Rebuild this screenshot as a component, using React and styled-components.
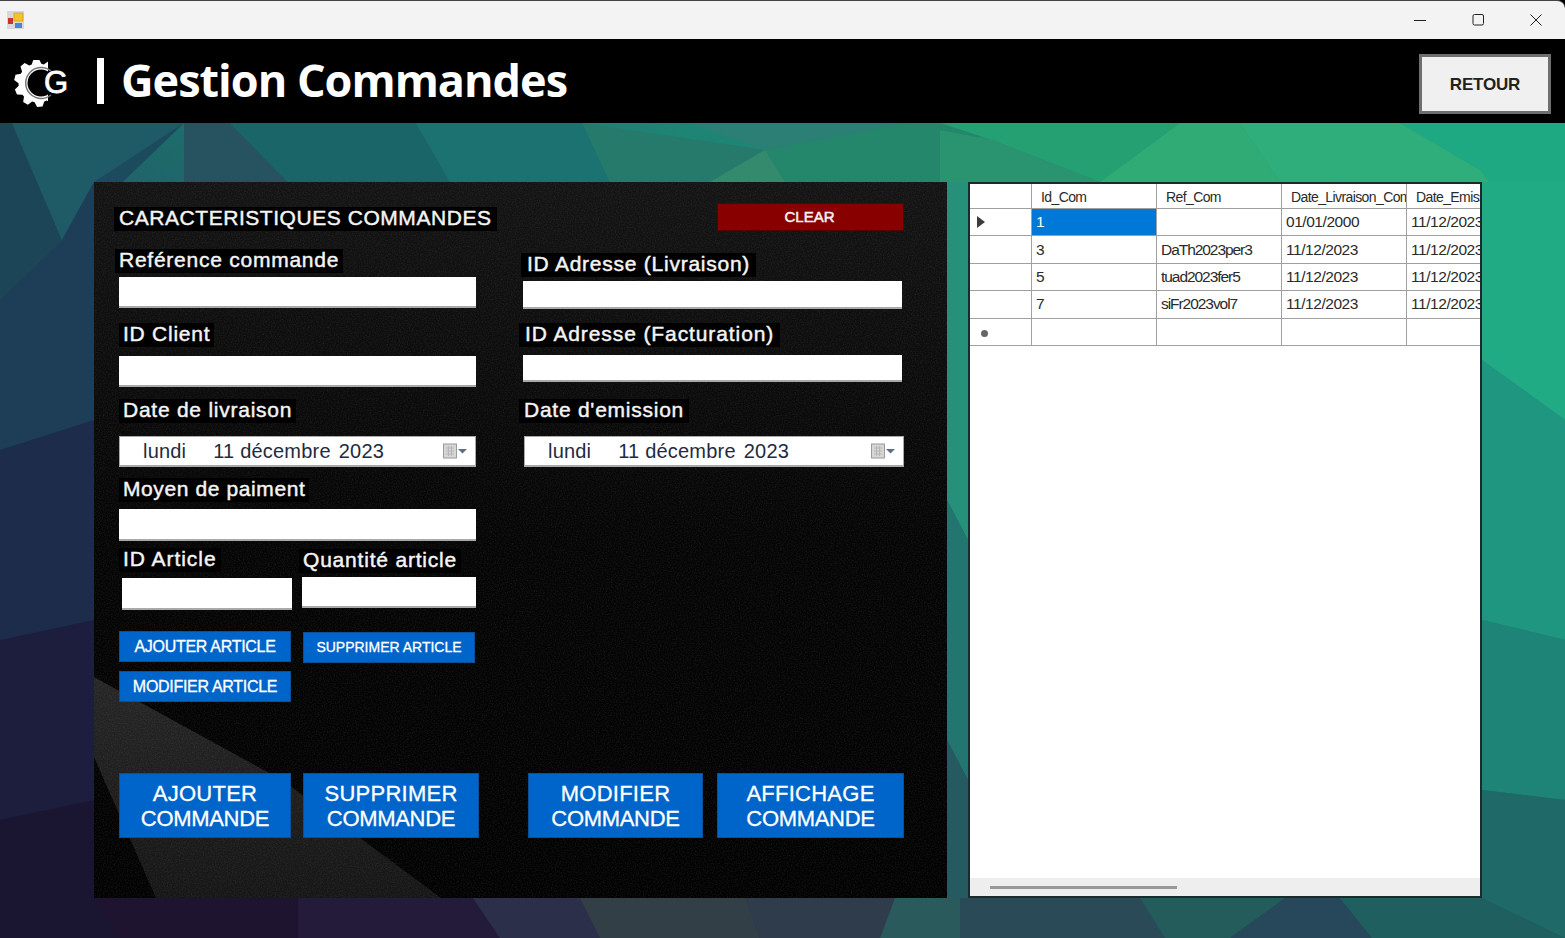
import React from "react";
import styled, { createGlobalStyle } from "styled-components";

const Global = createGlobalStyle`
  html, body { margin: 0; padding: 0; background: #000; overflow: hidden; }
  * { box-sizing: border-box; }
  body { font-family: "Liberation Sans", Arial, sans-serif; }
`;

const Page = styled.div`
  width: 1565px; height: 938px; display: flex; flex-direction: column; background: #000; overflow: hidden;
`;
const TitleBar = styled.div`
  height: 39px; flex: none; background: #f3f3f3; border-top: 1px solid #454545;
  border-radius: 0 8px 0 0; display: flex; align-items: center; justify-content: space-between;
  padding: 0 23px 0 7px;
`;
const WinControls = styled.div`display: flex; align-items: center; gap: 46px;`;
const Header = styled.header`
  height: 84px; flex: none; background: #000; display: flex; align-items: center; padding: 0 14px;
`;
const LogoMark = styled.svg`flex: none; margin-top: 5px;`;
const Divider = styled.span`
  width: 7px; height: 46px; margin: 0 18px 0 25px; background: #fff; flex: none;
`;
const Heading = styled.h1`
  margin: 0 0 0 -1px; flex: 1; color: #fff; font: 700 45px/1 "Open Sans", sans-serif; letter-spacing: -1px; padding-bottom: 4px;
`;
const BackButton = styled.button`
  width: 132px; height: 60px; margin-top: 5px; padding: 2px 0 0; background: #f0f0f0; border: 3px solid #6e6e6e; color: #222;
  font: 700 17px "Liberation Sans", sans-serif; letter-spacing: -0.2px;
`;
const Workspace = styled.main`
  position: relative; flex: 1; display: flex; gap: 21px; padding: 59px 0 40px 94px; overflow: hidden;
`;
const Backdrop = styled.svg`position: absolute; inset: 0; width: 100%; height: 100%;`;
const Panel = styled.section`
  position: relative; width: 853px; height: 716px; background: #0b0b0b; display: flex; flex-direction: column;
  padding: 21px 0 60px 25px; overflow: hidden;
`;
const PanelArt = styled.svg`position: absolute; inset: 0; width: 100%; height: 100%;`;
const Columns = styled.div`
  position: relative; display: grid; grid-template-columns: 404px 381px; flex: 1;
`;
const Column = styled.div`display: flex; flex-direction: column; align-items: flex-start; padding-top: ${p => p.$top || 0}px;`;
const Label = styled.label`
  display: block; height: 24px; line-height: 22px; background: #000; color: #f4f4f4; white-space: nowrap;
  font-size: 21px; font-weight: 400; -webkit-text-stroke: 0.45px #f4f4f4; padding: 0 ${p => p.$pad ?? 4}px;
  margin: ${p => p.$top || 0}px 0 0 ${p => (p.$left || 0) - (p.$pad ?? 4)}px;
  letter-spacing: ${p => p.$track ?? 0.75}px;
`;
const Field = styled.input`
  display: block; width: ${p => p.$width || 357}px; height: ${p => p.$height || 31}px;
  margin: ${p => p.$top || 0}px 0 0 ${p => p.$left || 0}px;
  background: #fff; border: 0; border-bottom: 2px solid #a9a9a9; border-radius: 0; padding: 0;
`;
const DateBox = styled.div`
  display: flex; align-items: center; height: 31px; width: ${p => p.$width}px;
  margin: ${p => p.$top || 0}px 0 0 ${p => p.$left || 0}px;
  background: #fff; border: 1px solid #a9a9a9; border-width: 1px 1px 2px 1px; color: #1f2b3f; font-size: 20px;
  padding-left: 23px; letter-spacing: 0.2px;
`;
const DatePart = styled.span`margin-right: ${p => p.$gap}px; white-space: nowrap;`;
const DateIcon = styled.svg`margin-left: auto; margin-right: ${p => p.$right || 6}px; flex: none;`;
const ArticleGrid = styled.div`display: grid; grid-template-columns: 183px 174px; width: 357px;`;
const ArticleCol = styled.div`display: flex; flex-direction: column; align-items: flex-start;`;
const BlueButton = styled.button`
  width: ${p => p.$width || 172}px; height: ${p => p.$height || 31}px;
  margin: ${p => p.$top || 0}px 0 0 ${p => p.$left || 0}px; padding: 0;
  background: #0065ca; border: 1px solid #0a4f98; color: #fff; font-family: "Liberation Sans", sans-serif;
  font-size: ${p => p.$size || 16}px; font-weight: 400; -webkit-text-stroke: ${p => p.$stroke ?? 0.3}px #fff; letter-spacing: ${p => p.$track ?? 0}px;
  line-height: 25px;
`;
const FirstLine = styled.span`display: block; letter-spacing: 0.25px;`;
const ClearButton = styled.button`
  width: 187px; height: 28px; margin-left: 194px; padding: 0 2px 2px 0; background: #880000; border: 1px solid #560000; color: #f4f4f4;
  font: 400 15px "Liberation Sans", sans-serif; -webkit-text-stroke: 0.5px #f4f4f4;
`;
const ActionRow = styled.div`position: relative; display: flex;`;
const DataGrid = styled.section`
  position: relative; width: 514px; height: 716px; background: #fff; border: 2px solid #1b2a2c; display: flex; flex-direction: column; overflow: hidden;
`;
const GridTable = styled.div`
  display: grid; grid-template-columns: 62px 125px 125px 125px 125px; grid-template-rows: 25px repeat(5, 27.4px); flex: 1; align-content: start;
  width: 562px; color: #2a2a2a; font-size: 15.5px;
`;
const Cell = styled.div`
  display: flex; align-items: center; overflow: hidden; white-space: nowrap; border-right: 1px solid #a0a0a0; border-bottom: 1px solid #a0a0a0;
  padding-left: ${p => p.$pad ?? 4}px; background: ${p => (p.$selected ? "#0078d7" : "#fff")}; color: ${p => (p.$selected ? "#fff" : "inherit")};
  letter-spacing: ${p => p.$track ?? -0.45}px;
`;
const HeaderCell = styled(Cell)`padding-left: 9px; padding-top: 2px; font-size: 14px; letter-spacing: -0.6px;`;
const RowHead = styled(Cell)`padding-left: 7px; justify-content: flex-start;`;
const RowArrow = styled.span`width: 0; height: 0; border-left: 8px solid #3c3c3c; border-top: 6px solid transparent; border-bottom: 6px solid transparent;`;
const NewRowMark = styled.span`width: 7px; height: 7px; margin: 3px 0 0 4px; border-radius: 50%; background: #666;`;
const Scrollbar = styled.div`height: 18px; flex: none; background: #eee; padding: 8px 0 0 20px;`;
const ScrollThumb = styled.div`width: 187px; height: 3px; background: #999;`;

const gearPath = (() => {
  const cx = 24, cy = 23, teeth = 10, out = 24, inn = 19.5;
  const pts = [];
  for (let i = 0; i < teeth; i++) {
    const s = (Math.PI * 2) / teeth;
    const a = i * s + 0.3;
    [[-0.5, inn], [-0.28, out], [0.08, out], [0.3, inn]].forEach(([o, r]) => {
      const t = a + o * s;
      pts.push(`${(cx + Math.cos(t) * r).toFixed(1)} ${(cy + Math.sin(t) * r).toFixed(1)}`);
    });
  }
  return "M" + pts.join("L") + "Z";
})();

const Logo = () => (
  <LogoMark width="58" height="48" viewBox="0 0 58 48" aria-hidden="true">
    <defs>
      <clipPath id="gearClip"><rect x="-2" y="-2" width="36" height="54" /></clipPath>
    </defs>
    <path d={gearPath} fill="#fff" clipPath="url(#gearClip)" />
    <circle cx="27" cy="23" r="13.5" fill="#000" />
    <path d="M37 11 A15.5 15.5 0 1 0 37 35" fill="none" stroke="#777" strokeWidth="1.5" />
    <text x="30" y="33" fontFamily="Liberation Sans" fontSize="31" fontWeight="400" stroke="#fff" strokeWidth="0.8" fill="#fff">G</text>
  </LogoMark>
);

const WinIcon = () => (
  <svg width="17" height="18" viewBox="0 0 17 18" aria-hidden="true">
    <rect x="0" y="0" width="17" height="18" fill="#d7d7d7" />
    <rect x="7" y="2" width="9" height="8" fill="#f5c22e" stroke="#c8921a" strokeWidth="0.6" />
    <rect x="1" y="7" width="5" height="6" fill="#c9342a" />
    <rect x="8" y="12" width="7" height="5" fill="#4a82dc" />
  </svg>
);

const MinIcon = () => <svg width="12" height="12" viewBox="0 0 12 12" aria-hidden="true"><path d="M0 6.5H12" stroke="#222" strokeWidth="1" /></svg>;
const MaxIcon = () => <svg width="12" height="12" viewBox="0 0 12 12" aria-hidden="true"><rect x="1" y="0.5" width="10.5" height="10.5" rx="1.5" fill="none" stroke="#222" strokeWidth="1" /></svg>;
const CloseIcon = () => <svg width="12" height="12" viewBox="0 0 12 12" aria-hidden="true"><path d="M0.5 0.5L11.5 11.5M11.5 0.5L0.5 11.5" stroke="#222" strokeWidth="1" /></svg>;

const Calendar = ({ right }) => (
  <DateIcon $right={right} width="26" height="16" viewBox="0 0 26 16" aria-hidden="true">
    <rect x="0.5" y="1" width="13" height="14" fill="#d6d6d6" stroke="#9a9a9a" />
    <path d="M3 5H11M3 8H11M3 11H11M5.5 3V13M8.5 3V13" stroke="#b0b0b0" strokeWidth="0.8" />
    <path d="M15 6H24L19.5 10.5Z" fill="#5d6f88" />
  </DateIcon>
);

const polys = [
  ["0,123 12,123 62,240 0,300", "#1c4558"],
  ["12,123 184,123 62,240", "#1f5a67"],
  ["184,123 62,240 94,182", "#1d4b5e"],
  ["184,123 230,123 288,182 184,182", "#27525f"],
  ["230,123 416,123 450,182 288,182", "#1a6568"],
  ["416,123 582,123 610,182 450,182", "#1b7270"],
  ["582,123 765,150 710,182 610,182", "#267a6c"],
  ["690,123 906,123 765,150", "#2b7f75"],
  ["765,150 906,123 980,123 980,182 785,182", "#24866a"],
  ["765,150 785,182 710,182", "#348a6c"],
  ["940,123 1180,123 1100,182 992,140", "#25a072"],
  ["940,130 992,140 1100,182 940,182", "#2a9370"],
  ["1180,123 1240,123 1280,182 1100,182", "#30ab75"],
  ["1240,123 1400,123 1480,170 1490,182 1280,182", "#2fae7b"],
  ["1400,123 1565,123 1565,182 1490,182 1480,170", "#1fa982"],
  ["1482,182 1565,182 1565,420 1482,360", "#21ab84"],
  ["1482,360 1565,420 1565,640 1482,620", "#1f9780"],
  ["1482,620 1565,640 1565,800 1482,790", "#1e8478"],
  ["1482,790 1565,800 1565,938 1482,898", "#1f6a69"],
  ["947,182 968,182 968,540 947,500", "#27907a"],
  ["947,500 968,540 968,780 947,740", "#23766f"],
  ["947,740 968,780 968,938 947,898", "#245a60"],
  ["0,300 62,240 94,182 94,420 0,450", "#1e3d56"],
  ["0,450 94,420 94,620 0,640", "#1c2c4a"],
  ["0,640 94,620 94,800 0,820", "#1d1e3e"],
  ["0,820 94,800 118,938 0,938", "#1a1632"],
  ["94,898 298,898 298,938 118,938", "#1e1430"],
  ["298,898 473,898 500,938 298,938", "#241a3a"],
  ["473,898 580,898 600,938 500,938", "#2b2f4a"],
  ["580,898 745,898 760,938 600,938", "#333f47"],
  ["745,898 895,898 880,938 760,938", "#2e3c4c"],
  ["895,898 968,898 960,938 880,938", "#2a5a5c"],
  ["960,898 1140,898 1165,938 960,938", "#2a4a58"],
  ["1140,898 1285,898 1230,938 1165,938", "#245c5c"],
  ["1285,898 1340,898 1372,938 1230,938", "#27475a"],
  ["1340,898 1482,898 1565,938 1372,938", "#1f5f5f"],
];

const rows = [
  { id: "1", ref: "", d: "01/01/2000", e: "11/12/2023", sel: true },
  { id: "3", ref: "DaTh2023per3", d: "11/12/2023", e: "11/12/2023" },
  { id: "5", ref: "tuad2023fer5", d: "11/12/2023", e: "11/12/2023" },
  { id: "7", ref: "siFr2023vol7", d: "11/12/2023", e: "11/12/2023" },
];

const DateValue = ({ width, right, left }) => (
  <DateBox $width={width} $top={13} $left={left}>
    <DatePart $gap={27}>lundi</DatePart>
    <DatePart $gap={8}>11 décembre</DatePart>
    <DatePart $gap={0}>2023</DatePart>
    <Calendar right={right} />
  </DateBox>
);

const BigAction = ({ width, left, first }) => (
  <BlueButton $width={width} $height={65} $left={left} $size={22} $track={-0.3}>
    <FirstLine>{first}</FirstLine>COMMANDE
  </BlueButton>
);

export default function App() {
  return (
    <Page>
      <Global />
      <TitleBar>
        <WinIcon />
        <WinControls><MinIcon /><MaxIcon /><CloseIcon /></WinControls>
      </TitleBar>
      <Header>
        <Logo />
        <Divider />
        <Heading>Gestion Commandes</Heading>
        <BackButton>RETOUR</BackButton>
      </Header>
      <Workspace>
        <Backdrop viewBox="0 123 1565 815" preserveAspectRatio="none" aria-hidden="true">
          <defs>
            <linearGradient id="bg" x1="0" y1="1" x2="1" y2="0">
              <stop offset="0" stopColor="#1a1430" />
              <stop offset="0.35" stopColor="#234a5e" />
              <stop offset="0.65" stopColor="#1c7c72" />
              <stop offset="1" stopColor="#26a87c" />
            </linearGradient>
          </defs>
          <rect x="0" y="123" width="1565" height="815" fill="url(#bg)" />
          {polys.map(([p, c]) => <polygon key={p} points={p} fill={c} />)}
        </Backdrop>
        <Panel>
          <PanelArt viewBox="0 0 853 716" preserveAspectRatio="none" aria-hidden="true">
            <defs>
              <filter id="grain" x="0" y="0" width="100%" height="100%">
                <feTurbulence type="fractalNoise" baseFrequency="0.75" numOctaves="2" seed="4" />
                <feColorMatrix values="0 0 0 0 1  0 0 0 0 1  0 0 0 0 1  0.1 0.1 0 0 -0.085" />
              </filter>
              <linearGradient id="sheen" x1="0" y1="0" x2="0" y2="1">
                <stop offset="0" stopColor="#141414" />
                <stop offset="0.5" stopColor="#050505" />
                <stop offset="1" stopColor="#020202" />
              </linearGradient>
              <linearGradient id="shard" x1="0" y1="0" x2="0" y2="1">
                <stop offset="0" stopColor="#262626" />
                <stop offset="1" stopColor="#161616" />
              </linearGradient>
            </defs>
            <rect width="853" height="716" fill="url(#sheen)" />
            <polygon points="0,495 188,598 347,716 62,716 0,575" fill="url(#shard)" />
            <rect width="853" height="716" filter="url(#grain)" />
          </PanelArt>
          <Columns>
            <Column $top={4}>
              <Label $track={0.55} $pad={5}>CARACTERISTIQUES COMMANDES</Label>
              <Label $top={18}>Reférence commande</Label>
              <Field $top={4} />
              <Label $top={15} $left={4}>ID Client</Label>
              <Field $top={9} />
              <Label $top={12} $left={4}>Date de livraison</Label>
              <DateValue width={357} right={6} />
              <Label $top={11} $left={4} $track={0.6}>Moyen de paiment</Label>
              <Field $top={7} $height={32} />
              <ArticleGrid>
                <ArticleCol>
                  <Label $top={7} $left={4} $track={0.95}>ID Article</Label>
                  <Field $top={6} $left={3} $width={170} $height={32} />
                  <BlueButton $top={21} $track={-0.3}>AJOUTER ARTICLE</BlueButton>
                  <BlueButton $top={9} $track={-0.3}>MODIFIER ARTICLE</BlueButton>
                </ArticleCol>
                <ArticleCol>
                  <Label $top={8} $left={1} $track={0.8}>Quantité article</Label>
                  <Field $top={4} $width={174} />
                  <BlueButton $top={24} $left={1} $size={14}>SUPPRIMER ARTICLE</BlueButton>
                </ArticleCol>
              </ArticleGrid>
            </Column>
            <Column>
              <ClearButton>CLEAR</ClearButton>
              <Label $top={22} $left={4} $pad={6}>ID Adresse (Livraison)</Label>
              <Field $top={4} $width={379} $height={28} />
              <Label $top={14} $left={2} $pad={6} $track={0.9}>ID Adresse (Facturation)</Label>
              <Field $top={8} $width={379} $height={27} />
              <Label $top={17} $left={1} $pad={5}>Date d'emission</Label>
              <DateValue width={380} right={6} left={1} />
            </Column>
          </Columns>
          <ActionRow>
            <BigAction width={172} first="AJOUTER" />
            <BigAction width={176} left={12} first="SUPPRIMER" />
            <BigAction width={175} left={49} first="MODIFIER" />
            <BigAction width={187} left={14} first="AFFICHAGE" />
          </ActionRow>
        </Panel>
        <DataGrid>
          <GridTable>
            <HeaderCell />
            <HeaderCell>Id_Com</HeaderCell>
            <HeaderCell>Ref_Com</HeaderCell>
            <HeaderCell>Date_Livraison_Com</HeaderCell>
            <HeaderCell>Date_Emission_Com</HeaderCell>
            {rows.map((r, i) => (
              <React.Fragment key={r.id}>
                <RowHead>{i === 0 && <RowArrow />}</RowHead>
                <Cell $selected={r.sel}>{r.id}</Cell>
                <Cell $track={-1.05}>{r.ref}</Cell>
                <Cell>{r.d}</Cell>
                <Cell>{r.e}</Cell>
              </React.Fragment>
            ))}
            <RowHead><NewRowMark /></RowHead>
            <Cell /><Cell /><Cell /><Cell />
          </GridTable>
          <Scrollbar><ScrollThumb /></Scrollbar>
        </DataGrid>
      </Workspace>
    </Page>
  );
}
